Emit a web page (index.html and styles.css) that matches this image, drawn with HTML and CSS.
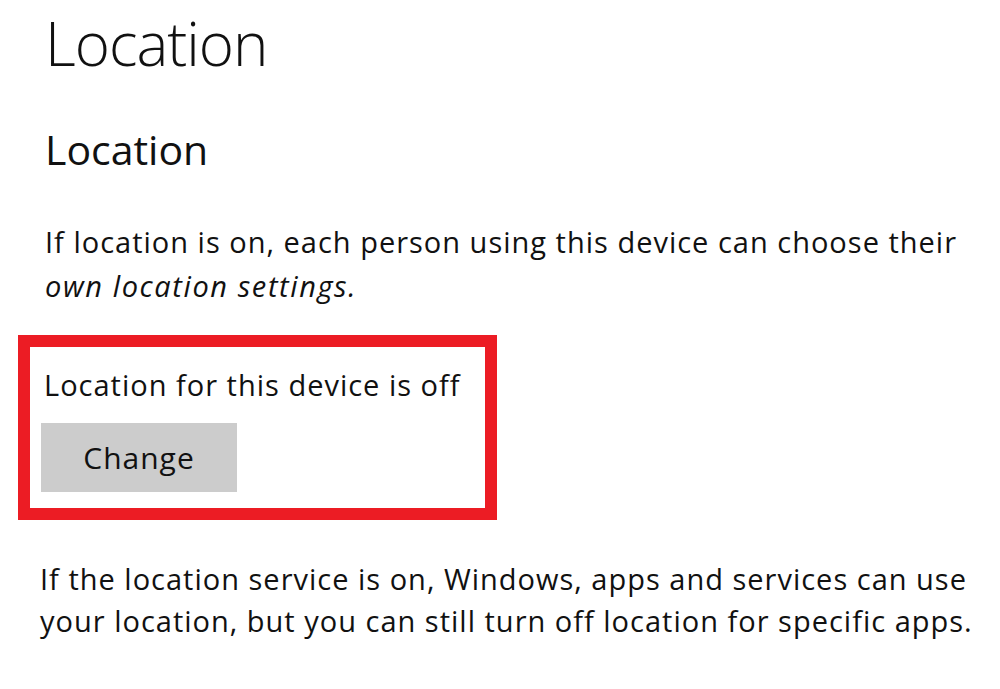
FILE: index.html
```html
<!DOCTYPE html>
<html lang="en">
<head>
<meta charset="utf-8">
<title>Location</title>
<link rel="stylesheet" href="styles.css">
</head>
<body>
<main class="page">
  <h1 class="title">Location</h1>
  <h2 class="subtitle">Location</h2>
  <p class="desc">If location is on, each person using this device can choose their <em>own location settings.</em></p>
  <section class="highlight">
    <p class="status">Location for this device is off</p>
    <button class="btn" type="button">Change</button>
  </section>
  <p class="desc desc-wide">If the location service is on, Windows, apps and services can use your location, but you can still turn off location for specific apps.</p>
</main>
</body>
</html>
```

FILE: styles.css
```css
html, body {
  margin: 0;
  padding: 0;
  background: #ffffff;
}
body {
  font-family: "Open Sans", "Noto Sans", "Liberation Sans", sans-serif;
  color: #111111;
  width: 1000px;
  height: 689px;
  overflow: hidden;
}
.page {
  padding: 0 0 0 45px;
}
.title {
  margin: 0;
  padding-top: 7px;
  font-size: 60px;
  font-weight: 300;
  line-height: 72px;
  letter-spacing: -1px;
}
.subtitle {
  margin: 0;
  padding-top: 45px;
  font-size: 41px;
  font-weight: 400;
  line-height: 50px;
}
.desc {
  margin: 46px 0 0 0;
  width: 935px;
  font-size: 29px;
  letter-spacing: 1px;
  line-height: 44px;
}
.desc em {
  font-style: italic;
  letter-spacing: 1.6px;
}
.highlight {
  margin: 27px 0 0 -27px;
  width: 455px;
  height: 161px;
  border: 12px solid #ec1c24;
  box-sizing: content-box;
  padding: 0;
}
.status {
  margin: 0;
  padding: 18px 0 0 14px;
  font-size: 29px;
  letter-spacing: 1px;
  line-height: 40px;
}
.btn {
  display: block;
  margin: 18px 0 0 11px;
  width: 196px;
  height: 69px;
  border: none;
  background: #cccccc;
  font-family: inherit;
  color: #111111;
  font-size: 30px;
  letter-spacing: 1px;
  padding: 0;
}
.desc-wide {
  margin: 38px 0 0 -5px;
  width: 945px;
  line-height: 42px;
}
```
